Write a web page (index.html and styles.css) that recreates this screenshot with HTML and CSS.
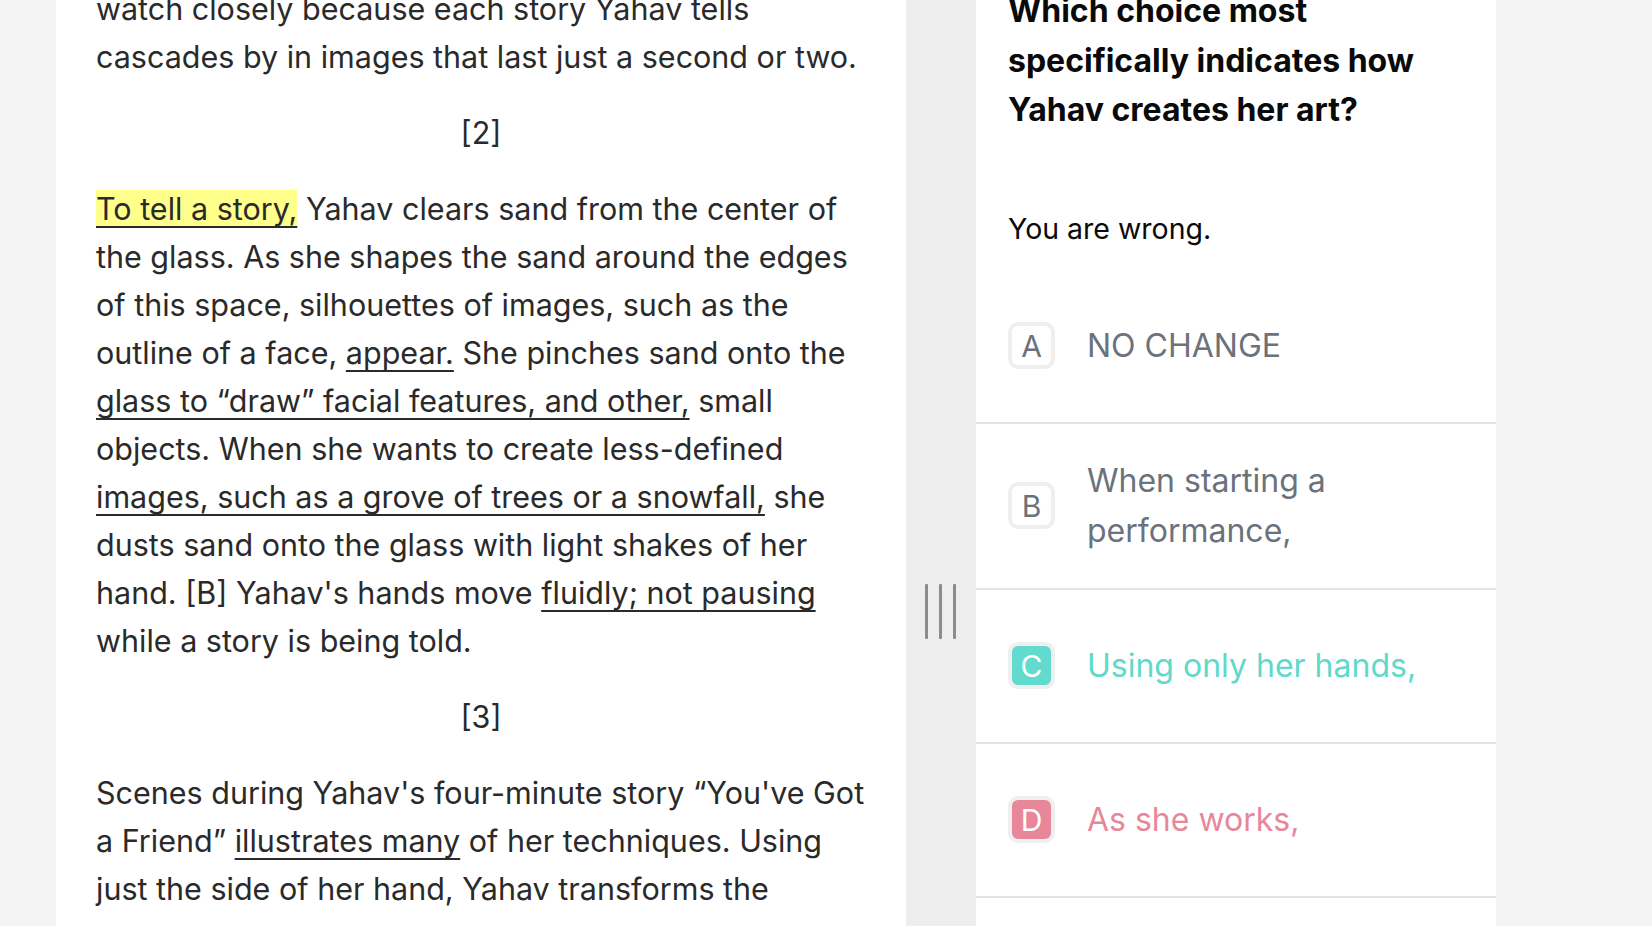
FILE: index.html
```html
<!DOCTYPE html>
<html lang="en">
<head>
<meta charset="utf-8">
<title>Passage question</title>
<link rel="stylesheet" href="styles.css">
</head>
<body>
<div class="app">
  <main class="passage">
    <div class="passage-body">
      <p class="para">watch closely because each story Yahav tells cascades by in images that last just a second or two.</p>
      <p class="marker">[2]</p>
      <p class="para"><span class="hl u">To tell a story,</span> Yahav clears sand from the center of the glass. As she shapes the sand around the edges of this space, silhouettes of images, such as the outline of a face, <span class="u">appear.</span> She pinches sand onto the <span class="u">glass to “draw” facial features, and other,</span> small objects. When she wants to create less-defined <span class="u">images, such as a grove of trees or a snowfall,</span> she dusts sand onto the glass with light shakes of her hand. [B] Yahav's hands move <span class="u">fluidly; not pausing</span> while a story is being told.</p>
      <p class="marker">[3]</p>
      <p class="para">Scenes during Yahav's four-minute story “You've Got a Friend” <span class="u">illustrates many</span> of her techniques. Using just the side of her hand, Yahav transforms the</p>
    </div>
  </main>
  <div class="divider">
    <div class="handle"><span></span><span></span><span></span></div>
  </div>
  <section class="question">
    <h2 class="q-title">Which choice most specifically indicates how Yahav creates her art?</h2>
    <p class="verdict">You are wrong.</p>
    <ul class="options">
      <li class="option"><span class="badge">A</span><span class="opt-text">NO CHANGE</span></li>
      <li class="option"><span class="badge">B</span><span class="opt-text">When starting a performance,</span></li>
      <li class="option correct"><span class="badge">C</span><span class="opt-text">Using only her hands,</span></li>
      <li class="option wrong"><span class="badge">D</span><span class="opt-text">As she works,</span></li>
    </ul>
  </section>
  <div class="rest"></div>
</div>
</body>
</html>
```

FILE: styles.css
```css
html, body {
  margin: 0;
  padding: 0;
  height: 100%;
}
body {
  background: #f4f4f4;
  font-family: Inter, "Noto Sans", "Liberation Sans", sans-serif;
  overflow: hidden;
}
.app {
  display: flex;
  height: 100vh;
  padding-left: 56px;
  box-sizing: border-box;
}
.passage {
  flex: none;
  width: 850px;
  background: #ffffff;
  padding: 0 40px;
  box-sizing: border-box;
  overflow: hidden;
  color: #2a2a2a;
}
.passage-body {
  margin-top: -15px;
}
.para, .marker {
  margin: 0 0 28px 0;
  font-size: 30.5px;
  line-height: 48px;
}
.marker {
  text-align: center;
}
.u {
  text-decoration: underline;
  text-decoration-thickness: 2px;
  text-underline-offset: 6px;
  text-decoration-skip-ink: none;
}
.hl {
  background: #ffff8c;
}
.divider {
  flex: none;
  width: 70px;
  background: #ededed;
  display: flex;
  justify-content: center;
  padding-top: 584px;
  padding-right: 1px;
  box-sizing: border-box;
}
.handle {
  display: flex;
  gap: 11px;
  height: 55px;
}
.handle span {
  width: 3px;
  height: 55px;
  background: #8c8c8c;
  border-radius: 1px;
}
.question {
  flex: none;
  width: 520px;
  background: #ffffff;
  overflow: hidden;
}
.q-title {
  margin: -14px 0 0 0;
  padding: 0 32px;
  font-size: 32px;
  line-height: 49.5px;
  font-weight: 700;
  color: #0a0a0a;
}
.verdict {
  margin: 74px 0 0 0;
  padding: 0 32px;
  font-size: 28.5px;
  line-height: 40px;
  color: #0a0a0a;
}
.options {
  list-style: none;
  margin: 21px 0 0 0;
  padding: 0;
}
.option {
  display: flex;
  align-items: center;
  gap: 32px;
  min-height: 154px;
  padding: 32px 32px;
  box-sizing: border-box;
  border-bottom: 2px solid #e2e5e8;
  color: #6b727c;
}
.badge {
  flex: none;
  width: 47px;
  height: 47px;
  box-sizing: border-box;
  border: 4px solid #efefef;
  border-radius: 10px;
  display: flex;
  align-items: center;
  justify-content: center;
  font-size: 30px;
  line-height: 1;
  color: #6b727c;
  background: #ffffff;
}
.opt-text {
  font-size: 32px;
  line-height: 50px;
}
.correct .badge {
  background: #62dacd;
  color: #ffffff;
}
.correct .opt-text {
  color: #5fd9cb;
}
.wrong .badge {
  background: #e8879a;
  color: #ffffff;
}
.wrong .opt-text {
  color: #e8879a;
}
.rest {
  flex: 1;
}
```
